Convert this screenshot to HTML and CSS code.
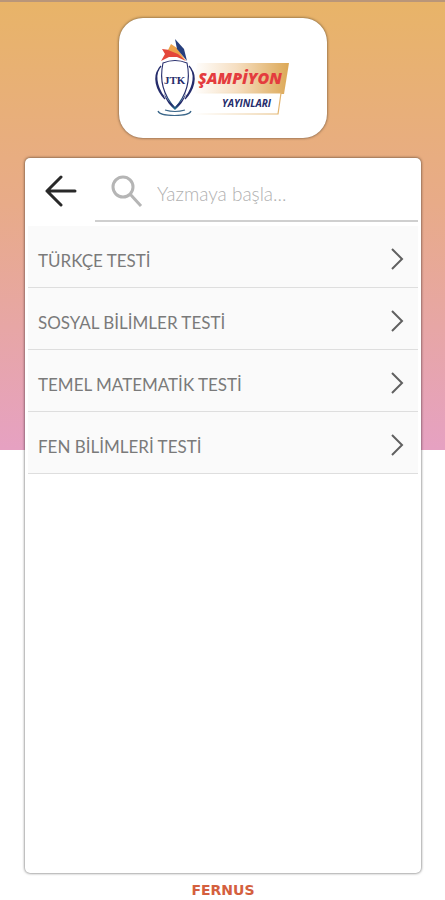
FILE: index.html
```html
<!DOCTYPE html>
<html lang="tr">
<head>
<meta charset="utf-8">
<meta name="viewport" content="width=device-width, initial-scale=1">
<title>Şampiyon Yayınları</title>
<link rel="stylesheet" href="styles.css">
</head>
<body>
<div class="page">
  <header class="brand">
    <svg class="brand-logo" viewBox="0 0 140 84" role="img" aria-label="Şampiyon Yayınları">
      <defs>
        <linearGradient id="gold" x1="0" x2="1"><stop offset="0" stop-color="#fff"/><stop offset=".45" stop-color="#f6dfc2"/><stop offset="1" stop-color="#dca856"/></linearGradient>
        <linearGradient id="edge" x1="0" x2="1"><stop offset="0" stop-color="#fff"/><stop offset="1" stop-color="#e2b36c"/></linearGradient>
        <linearGradient id="cup" x1="0" x2="0" y1="0" y2="1"><stop offset="0" stop-color="#252c6b"/><stop offset=".7" stop-color="#252c6b"/><stop offset="1" stop-color="#238096"/></linearGradient>
      </defs>
      <path d="M46 28h92l-5 31H42z" fill="url(#gold)"/>
      <path d="M42 58h88l-3 21H42z" fill="#fff" stroke="url(#edge)" stroke-width="1.2"/>
      <path d="M10 26l4-7-3-5 8 1 3-4 3 5 10 10-9-4-8 0z" fill="#e4473a"/>
      <path d="M17 15l3-6 6 4 9 13-8-7z" fill="#eda34c"/>
      <path d="M24 4l9 10 3 12-10-12z" fill="#263e7d"/>
      <path d="M12 28q12-5 24 0c4 18-1 33-12 45C13 61 8 46 12 28z" fill="#fff" stroke="url(#cup)" stroke-width="1.1"/>
      <path d="M13 58c3 7 7 10 11 14 4-4 8-7 11-14-2 9-7 13-11 17-4-4-9-8-11-17z" fill="url(#cup)"/>
      <path d="M10 31C3 38 5 51 13 62M8 34C2 42 5 54 14 64M38 31c7 7 5 20-3 31M40 34c6 8 3 20-6 30" fill="none" stroke="#252c6b" stroke-width="1.3"/>
      <path d="M14 75q10 3 20 0M7 76c2 6 31 6 33 0" fill="none" stroke="#3c678a" stroke-width="1.2"/>
      <text class="logo-initials" x="13" y="49">JTK</text>
      <text class="logo-name" x="47" y="49">ŞAMPİYON</text>
      <text class="logo-sub" x="71" y="72">YAYINLARI</text>
    </svg>
  </header>
  <main class="panel">
    <div class="toolbar">
      <button class="back" type="button" aria-label="Geri">
        <svg viewBox="0 0 32 32"><path d="M30 16H2M16 2L2 16l14 14"/></svg>
      </button>
      <label class="search">
        <svg class="search-icon" viewBox="0 0 32 32" aria-hidden="true"><circle cx="12" cy="12" r="10"/><path d="M19 19l11 12"/></svg>
        <input type="search" aria-label="Ara" placeholder="Yazmaya başla...">
      </label>
    </div>
    <nav class="tests">
      <a href="#turkce"><span>TÜRKÇE TESTİ</span><svg viewBox="0 0 14 22" aria-hidden="true"><path d="M2 1l10 10L2 21"/></svg></a>
      <a href="#sosyal"><span>SOSYAL BİLİMLER TESTİ</span><svg viewBox="0 0 14 22" aria-hidden="true"><path d="M2 1l10 10L2 21"/></svg></a>
      <a href="#matematik"><span>TEMEL MATEMATİK TESTİ</span><svg viewBox="0 0 14 22" aria-hidden="true"><path d="M2 1l10 10L2 21"/></svg></a>
      <a href="#fen"><span>FEN BİLİMLERİ TESTİ</span><svg viewBox="0 0 14 22" aria-hidden="true"><path d="M2 1l10 10L2 21"/></svg></a>
    </nav>
  </main>
  <footer class="footer">FERNUS</footer>
</div>
</body>
</html>
```
FILE: styles.css
```css
* {
  box-sizing: border-box;
}

body {
  margin: 0;
  background: #fff;
  font-family: Lato, "Open Sans", sans-serif;
}

.page {
  display: flex;
  flex-direction: column;
  min-height: 100vh;
  padding: 16px 24px 3px 25px;
  border-top: 2px solid #b99679;
  background: linear-gradient(#e8b468, #e8ab88 45%, #e6a1c2) top / 100% 50vh no-repeat border-box;
}

.brand {
  display: flex;
  align-self: center;
  padding: 17px 36px 19px 32px;
  border-radius: 24px;
  background: #fff;
  box-shadow: 0 0 3px rgba(0, 0, 0, 0.6);
}

.brand-logo {
  width: 140px;
  height: 84px;
}

.logo-initials {
  font: 700 11px "Liberation Serif", serif;
  fill: #252c6b;
}

.logo-name {
  font: italic 800 16px "Open Sans", sans-serif;
  fill: #e43c3e;
}

.logo-sub {
  font: italic 700 10px "Open Sans", sans-serif;
  fill: #252c6b;
}

.panel {
  flex: 1;
  margin-top: 20px;
  padding: 0 3px;
  border-radius: 5px;
  background: #fff;
  box-shadow: 0 0 3px rgba(0, 0, 0, 0.7);
}

.toolbar {
  display: flex;
  height: 64px;
  margin-bottom: 4px;
}

.back {
  width: 67px;
  padding: 2px 2px 0 0;
  border: 0;
  background: none;
}

.back svg {
  display: block;
  width: 32px;
  height: 32px;
  margin: 0 auto;
  fill: none;
  stroke: #292929;
  stroke-width: 3;
  stroke-linecap: round;
  stroke-linejoin: round;
}

.search {
  display: flex;
  flex: 1;
  align-items: center;
  gap: 14px;
  padding: 4px 0 0 16px;
  border-bottom: 2px solid #cfcfcf;
}

.search-icon {
  flex: none;
  width: 32px;
  height: 32px;
  fill: none;
  stroke: #b5b5b5;
  stroke-width: 3;
}

.search input {
  flex: 1;
  min-width: 0;
  padding: 4px 0 0;
  border: 0;
  outline: 0;
  background: none;
  color: #555;
  font: 300 19px Lato, sans-serif;
}

.search input::placeholder {
  color: #b0b0b0;
}

.tests a {
  display: flex;
  align-items: center;
  justify-content: space-between;
  height: 62px;
  padding: 4px 14px 0 10px;
  border-bottom: 1px solid #dedede;
  background: #fafafa;
  color: #7a7a7a;
  font-size: 17px;
  text-decoration: none;
}

.tests span {
  padding-top: 4px;
}

.tests svg {
  width: 14px;
  height: 22px;
  fill: none;
  stroke: #606060;
  stroke-width: 2;
}

.footer {
  padding-top: 10px;
  color: #d4603e;
  font: 700 14px/14px "DejaVu Sans", sans-serif;
  text-align: center;
}
```
